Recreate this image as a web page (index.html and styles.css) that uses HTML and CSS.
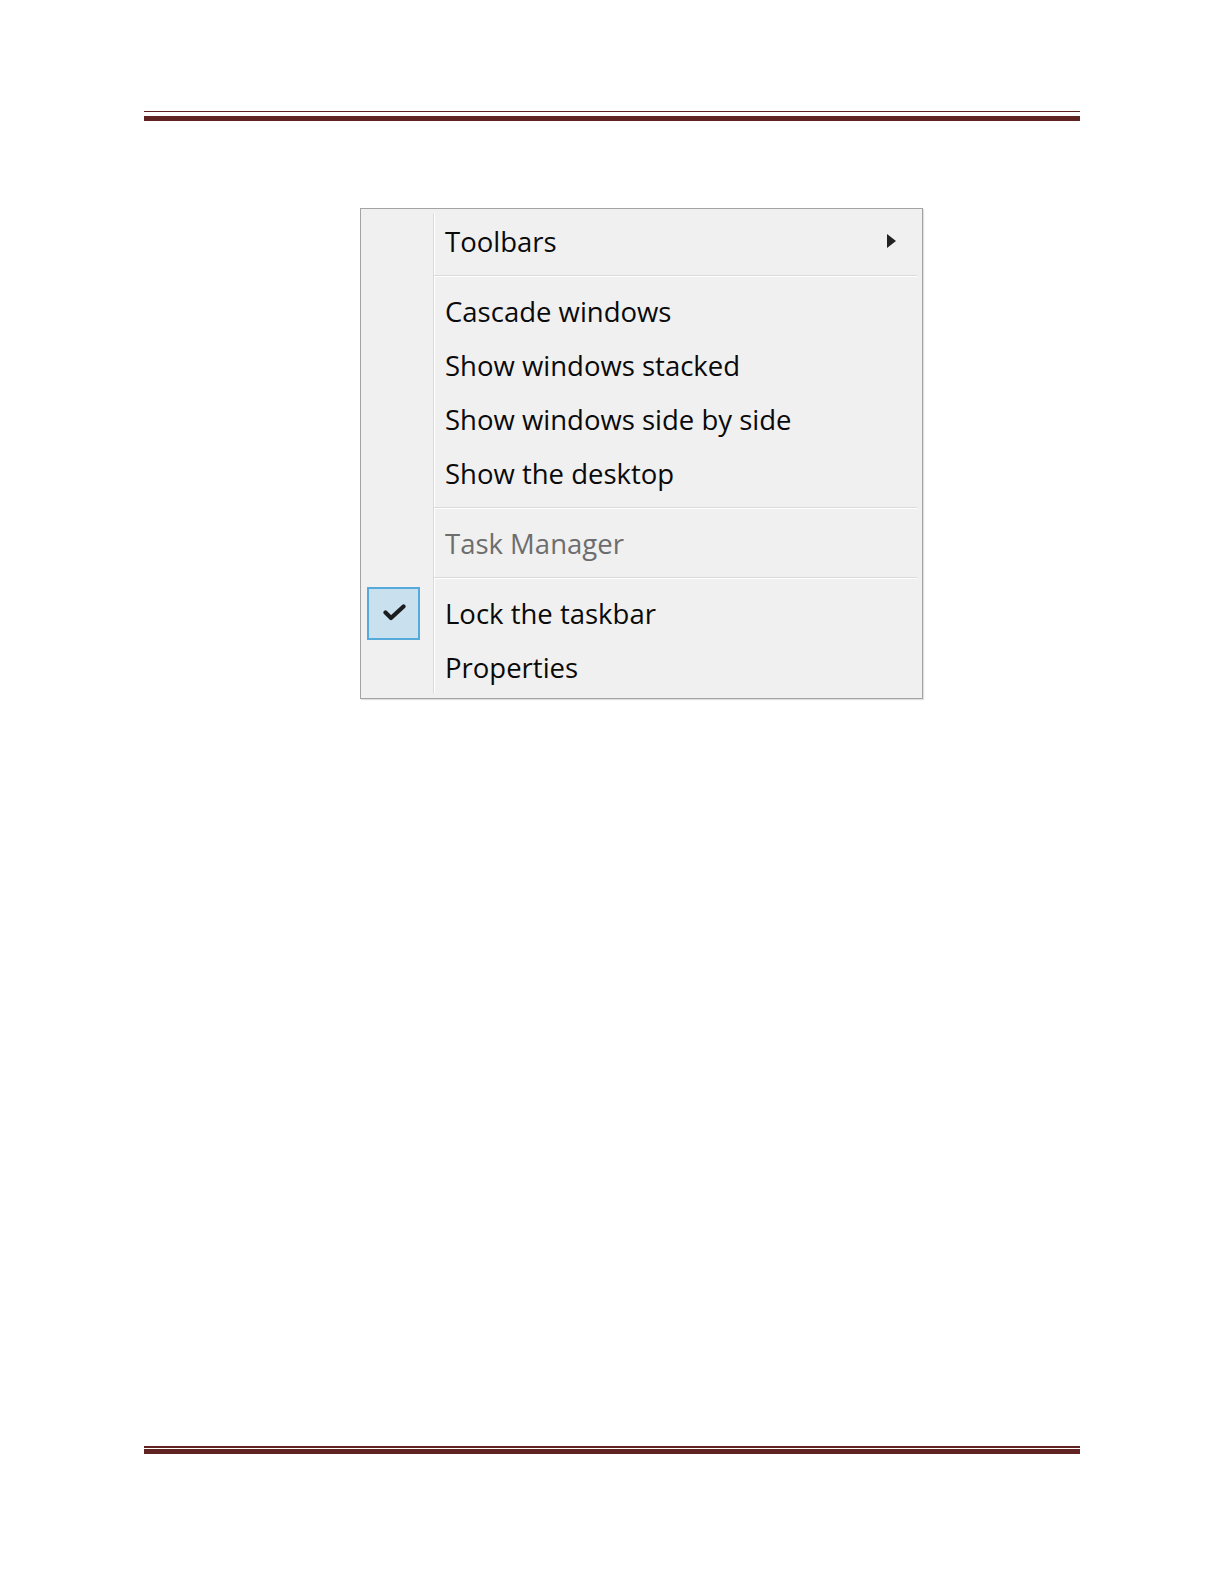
FILE: index.html
```html
<!DOCTYPE html>
<html lang="en">
<head>
  <meta charset="UTF-8" />
  <title>Taskbar context menu</title>
  <link rel="stylesheet" href="styles.css">
</head>
<body>
  <div class="page">
    <!-- 머리글 줄 -->
    <div class="rule rule-top"></div>

    <!-- ===== 작업 표시줄 메뉴 ===== -->
    <div class="context-menu">
      <div class="menu-list">
        <div class="menu-item">
          <span class="menu-check"></span>
          <span class="label">Toolbars</span>
          <span class="sub-arrow"></span>
        </div>
        <div class="menu-sep"></div>
        <div class="menu-item">
          <span class="menu-check"></span>
          <span class="label">Cascade windows</span>
        </div>
        <div class="menu-item">
          <span class="menu-check"></span>
          <span class="label">Show windows stacked</span>
        </div>
        <div class="menu-item">
          <span class="menu-check"></span>
          <span class="label">Show windows side by side</span>
        </div>
        <div class="menu-item">
          <span class="menu-check"></span>
          <span class="label">Show the desktop</span>
        </div>
        <div class="menu-sep"></div>
        <div class="menu-item disabled">
          <span class="menu-check"></span>
          <span class="label">Task Manager</span>
        </div>
        <div class="menu-sep"></div>
        <div class="menu-item">
          <span class="menu-check checked">
            <svg width="24" height="17" viewBox="0 0 24 17">
              <path d="M3.5 8.5 L9 14 L21.5 2.5" fill="none" stroke="#1c1c1c" stroke-width="4.2" stroke-linecap="round" stroke-linejoin="round"/>
            </svg>
          </span>
          <span class="label">Lock the taskbar</span>
        </div>
        <div class="menu-item">
          <span class="menu-check"></span>
          <span class="label">Properties</span>
        </div>
      </div>
    </div>

    <!-- 바닥글 줄 -->
    <div class="rule rule-bottom"></div>
  </div>
</body>
</html>
```

FILE: styles.css
```css
/* ===== 페이지 ===== */
body {
  margin: 0;
  background: #ffffff;
  font-family: "Open Sans", "Noto Sans", sans-serif;
}

.page {
  width: 936px;
  margin-left: 144px;
  padding-top: 111px;
}

/* 머리글/바닥글 이중선 (Word 스타일) */
.rule {
  box-sizing: content-box;
}

.rule-top {
  height: 4px;
  border-top: 1px solid #622423;
  border-bottom: 5px solid #622423;
}

.rule-bottom {
  margin-top: 747px;
  height: 1px;
  border-top: 2px solid #622423;
  border-bottom: 5px solid #622423;
}

/* ===== 컨텍스트 메뉴 ===== */
.context-menu {
  width: 561px;
  margin-top: 87px;
  margin-left: 216px;
  padding: 5px 0 4px;
  background: #f0f0f0;
  border: 1px solid #a3a3a3;
  box-shadow: 1px 1px 1px rgba(0, 0, 0, 0.12);
}

/* 왼쪽 아이콘 영역 구분선 */
.menu-list {
  background: linear-gradient(to right,
    transparent 72px,
    #d9d9d9 72px, #d9d9d9 73px,
    #ffffff 73px, #ffffff 74px,
    transparent 74px);
}

.menu-item {
  display: flex;
  align-items: center;
  height: 54px;
  color: #0a0a0a;
  font-size: 27.5px;
}

.menu-item.disabled {
  color: #6d6d6d;
}

.menu-check {
  display: flex;
  align-items: center;
  justify-content: center;
  box-sizing: border-box;
  width: 53px;
  height: 53px;
  margin-left: 6px;
  border: 2px solid transparent;
}

.menu-check.checked {
  background: #c9e1ee;
  border-color: #56a9db;
}

.menu-check svg {
  margin-top: -2px;
}

.label {
  margin-left: 25px;
  white-space: nowrap;
}

.sub-arrow {
  margin-left: auto;
  margin-right: 26px;
  width: 0;
  height: 0;
  border-left: 9px solid #222222;
  border-top: 7px solid transparent;
  border-bottom: 7px solid transparent;
}

.menu-sep {
  height: 7px;
  margin: 0 5px 0 73px;
  border-bottom: 1px solid #dadada;
  box-shadow: 0 1px 0 #ffffff;
  margin-bottom: 8px;
}
```
